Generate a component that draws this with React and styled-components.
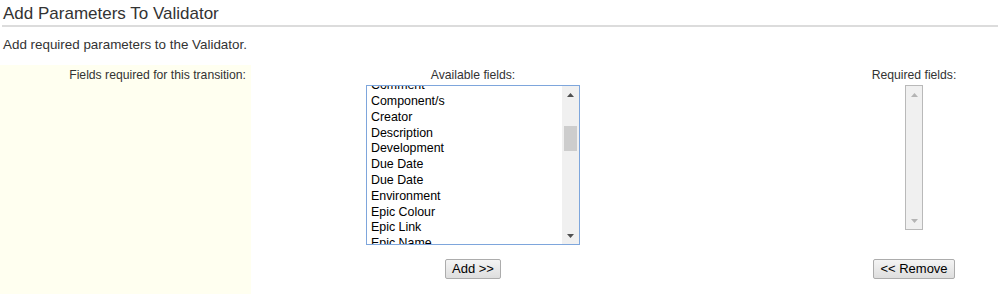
import { useLayoutEffect, useRef } from "react";
import styled, { createGlobalStyle } from "styled-components";

const GlobalStyle = createGlobalStyle`
  html, body {
    margin: 0;
    padding: 0;
    background: #fff;
  }
  body {
    font-family: Arial, "Liberation Sans", sans-serif;
    color: #333;
  }
`;

const availableFields = [
  "Affects Version/s",
  "Approvals",
  "Assignee",
  "Attachment",
  "Begin Date",
  "Business Value",
  "Category",
  "Change reason",
  "Change risk",
  "Comment",
  "Component/s",
  "Creator",
  "Description",
  "Development",
  "Due Date",
  "Due Date",
  "Environment",
  "Epic Colour",
  "Epic Link",
  "Epic Name",
  "Epic Status",
  "Fix Version/s",
  "Flagged",
  "Impact",
  "Issue Type",
  "Labels",
  "Linked Issues",
  "Log Work",
  "Organizations",
  "Original Estimate",
  "Priority",
  "Rank",
  "Reporter",
  "Request participants",
  "Resolution",
  "Satisfaction",
  "Security Level",
  "Sprint",
  "Story Points",
  "Summary",
  "Team",
  "Time Tracking",
  "Urgency",
  "Workaround",
  "Votes",
  "Watchers",
];

const ROW = 15.8;
// scrolled so that "Comment" is cut at the top edge
const SCROLL_TOP = 10 * ROW - 8;

export default function App() {
  const viewRef = useRef(null);

  useLayoutEffect(() => {
    if (viewRef.current) viewRef.current.scrollTop = SCROLL_TOP;
  }, []);

  return (
    <Page>
      <GlobalStyle />
      <Title>Add Parameters To Validator</Title>
      <Intro>Add required parameters to the Validator.</Intro>
      <FormGrid>
        <LabelCell>Fields required for this transition:</LabelCell>
        <FieldColumn>
          <ColumnLabel>Available fields:</ColumnLabel>
          <ListBox>
            <ListView ref={viewRef}>
              {availableFields.map((name, i) => (
                <ListItem key={i}>{name}</ListItem>
              ))}
            </ListView>
            <ScrollBar>
              <ArrowButton>
                <Arrow />
              </ArrowButton>
              <Track>
                <Thumb style={{ marginTop: 23, height: 25 }} />
              </Track>
              <ArrowButton>
                <Arrow down />
              </ArrowButton>
            </ScrollBar>
          </ListBox>
          <Button $gap={14}>Add &gt;&gt;</Button>
        </FieldColumn>
        <RequiredColumn>
          <ColumnLabel>Required fields:</ColumnLabel>
          <EmptyBox>
            <ArrowButton>
              <Arrow disabled />
            </ArrowButton>
            <Track />
            <ArrowButton>
              <Arrow down disabled />
            </ArrowButton>
          </EmptyBox>
          <Button $gap={29}>&lt;&lt; Remove</Button>
        </RequiredColumn>
      </FormGrid>
    </Page>
  );
}

function Arrow({ down, disabled }) {
  return (
    <svg width="7" height="4" viewBox="0 0 7 4">
      <path
        d={down ? "M0 0H7L3.5 4Z" : "M3.5 0L7 4H0Z"}
        fill={disabled ? "#b4b4b4" : "#505050"}
      />
    </svg>
  );
}

const Page = styled.div`
  width: 998px;
  height: 294px;
  overflow: hidden;
`;

const Title = styled.h2`
  margin: 0 0 0 2px;
  padding: 4px 0 1px 1px;
  font-size: 17px;
  font-weight: normal;
  line-height: 20px;
  color: #333;
  border-bottom: 2px solid #dcdcdc;
`;

const Intro = styled.p`
  margin: 10px 0 12px 3px;
  font-size: 13.4px;
  line-height: 16px;
  color: #333;
`;

const FormGrid = styled.div`
  display: grid;
  grid-template-columns: 251px 444px 1fr;
  align-items: start;
  min-height: 240px;
`;

const LabelCell = styled.div`
  align-self: stretch;
  background: #fffff0;
  padding: 3px 5px 0 0;
  text-align: right;
  font-size: 12.2px;
  line-height: 14px;
  color: #333;
`;

const FieldColumn = styled.div`
  display: flex;
  flex-direction: column;
  align-items: center;
  padding-top: 3px;
`;

const RequiredColumn = styled(FieldColumn)`
  justify-self: end;
  width: 168px;
`;

const ColumnLabel = styled.div`
  font-size: 12.2px;
  line-height: 14px;
  color: #333;
  margin-bottom: 3px;
`;

const ListBox = styled.div`
  display: flex;
  width: 214px;
  height: 160px;
  box-sizing: border-box;
  border: 1px solid #7ea6dc;
  background: #fff;
`;

const ListView = styled.div`
  flex: 1;
  overflow: hidden;
`;

const ListItem = styled.div`
  height: ${ROW}px;
  line-height: ${ROW}px;
  padding-left: 4px;
  font-size: 12.4px;
  color: #000;
  white-space: nowrap;
`;

const ScrollBar = styled.div`
  display: flex;
  flex-direction: column;
  width: 17px;
  background: #f0f0f0;
`;

const ArrowButton = styled.div`
  height: 17px;
  display: flex;
  align-items: center;
  justify-content: center;
  flex-shrink: 0;
`;

const Track = styled.div`
  flex: 1;
  display: flex;
  flex-direction: column;
  align-items: center;
`;

const Thumb = styled.div`
  width: 13px;
  background: #cdcdcd;
`;

const EmptyBox = styled.div`
  display: flex;
  flex-direction: column;
  width: 18px;
  height: 145px;
  box-sizing: border-box;
  border: 1px solid #b9b9b9;
  background: #f0f0f0;
`;

const Button = styled.button`
  margin-top: ${(p) => p.$gap}px;
  height: 20px;
  padding: 0 6px;
  font-family: Arial, "Liberation Sans", sans-serif;
  font-size: 13px;
  line-height: 18px;
  color: #000;
  background: linear-gradient(#f4f4f4, #dedede);
  border: 1px solid #acacac;
  border-radius: 2px;
  cursor: pointer;
`;
